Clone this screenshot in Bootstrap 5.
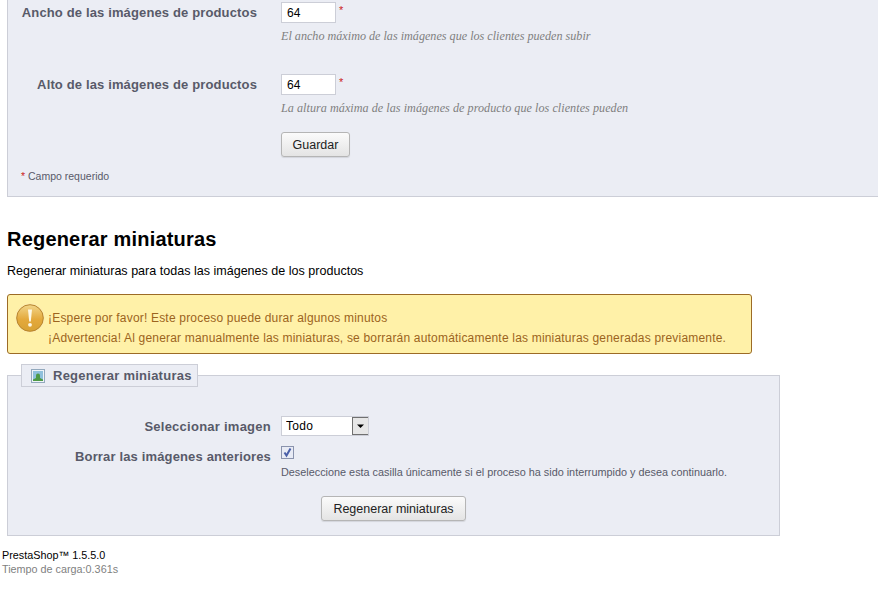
<!DOCTYPE html>
<html lang="es"><head><meta charset="utf-8"><title>Regenerar miniaturas</title>
<link rel="stylesheet" href="https://cdn.jsdelivr.net/npm/bootstrap@5.3.0/dist/css/bootstrap.min.css">
<style>
html,body{height:592px;overflow:hidden;background:#fff}
body{font-family:"Liberation Sans",Arial,sans-serif;font-size:12px;color:#000;line-height:1.2}
.prefs{margin:0 -3px 0 7px;height:197px;background:#ebedf4;border:1px solid #ccced7;border-top:0;padding-top:2px}
.frow{display:flex}
.flabel{width:249px;text-align:right;font-weight:700;font-size:13px;letter-spacing:.14px;color:#585a69;line-height:20px;padding-top:1px;flex:none}
.fval{margin-left:24px}
.num{width:55px;height:21px;border:1px solid #ccced7;background:#fff;padding:0 5px;font:12px "Liberation Sans",sans-serif;color:#000;display:block}
.req{color:#c22;font-size:11px;margin:3px 0 0 3px;line-height:11px;align-self:flex-start}
.hint{font-family:"Liberation Serif",serif;font-style:italic;font-size:12.15px;color:#7f7f7f;margin:6px 0 0;line-height:14px}
.hint.wider{letter-spacing:.04px}
.rowgap{margin-top:31px}
.pbtn{background:linear-gradient(#fbfbfb,#e4e4e4);border:1px solid #b5b5b5;border-radius:3px;font-size:12.5px;color:#222;padding:0;height:25px;line-height:22px;box-shadow:0 1px 1px rgba(0,0,0,.1)}
.save{width:69px;margin-top:17px}
.go{width:145px}
.reqnote{font-size:10.5px;color:#585a69;margin:13px 0 0 13px;line-height:12px}
.reqnote b{color:#c22;font-weight:400}
.htitle{font-size:20px;font-weight:700;margin:32px 0 0 7px;line-height:21px;color:#000;letter-spacing:.2px}
.sub{margin:14px 0 0 7px;line-height:14px;font-size:12.55px}
.warnbox{margin:16px 0 0 7px;width:745px;height:60px;background:#fff1a8;border:1px solid #9c6b26;border-radius:3px;color:#9c6420;display:flex;align-items:flex-start;padding:8px 0 0 7px;gap:3px;font-size:12px;letter-spacing:.19px}
.warnbox p{margin:5px 0 0;line-height:20px}
fieldset.regen{margin:10px 0 0 7px;width:773px;height:172px;background:#ebedf4;border:1px solid #ccced7;padding:0;min-width:0}
fieldset.regen legend{float:none;width:177px;height:23px;margin:0 0 0 13px;padding:0 0 0 9px;background:#ebedf4;border:1px solid #ccced7;font-size:13px;font-weight:700;color:#585a69;letter-spacing:.25px;line-height:21px;display:flex;align-items:center;gap:8px}
.r2 .flabel{width:263px;letter-spacing:.25px;padding-top:1px}
.r2 .tight{letter-spacing:.15px}
.r2 .fval{margin-left:10px}
.first{margin-top:29px}
.second{margin-top:9px}
.pick{appearance:none;width:88px;height:20px;border:1px solid #ccced7;background-color:#fff;background-image:url("data:image/svg+xml,%3Csvg xmlns='http://www.w3.org/2000/svg' width='17' height='18'%3E%3Crect x='.5' y='.5' width='16' height='17' fill='%23e6e6e6' stroke='%23707070'/%3E%3Cpath d='M5 7.5h7l-3.5 3.5z' fill='%23000'/%3E%3C/svg%3E");background-repeat:no-repeat;background-position:right -1px center;padding:0 0 0 4px;font:12px "Liberation Sans",sans-serif;color:#000;display:block;letter-spacing:.3px}
.tick{appearance:none;width:13px;height:13px;margin:0;display:block;border:1px solid #8a93ad;background:#e8ebf5 url("data:image/svg+xml,%3Csvg xmlns='http://www.w3.org/2000/svg' width='11' height='11'%3E%3Cpath d='M2.5 5.5l2 3L8.5 1.5' fill='none' stroke='%234a5fa8' stroke-width='2'/%3E%3C/svg%3E") center no-repeat}
.hint2{font-size:10.85px;color:#585a69;margin:7px 0 0;line-height:13px}
.actions{margin:17px 0 0 313px}
.foot{margin:12px 0 0 2px;font-size:10.8px;line-height:14px}
.foot div+div{color:#7f7f7f}
</style></head><body>
<div class="prefs">
  <div class="frow"><label class="flabel">Ancho de las imágenes de productos</label>
    <div class="fval"><div class="d-flex"><input class="num" value="64" aria-label="Ancho"><span class="req">*</span></div>
    <p class="hint">El ancho máximo de las imágenes que los clientes pueden subir</p></div></div>
  <div class="frow rowgap"><label class="flabel">Alto de las imágenes de productos</label>
    <div class="fval"><div class="d-flex"><input class="num" value="64" aria-label="Alto"><span class="req">*</span></div>
    <p class="hint wider">La altura máxima de las imágenes de producto que los clientes pueden</p>
    <button class="pbtn save">Guardar</button></div></div>
  <p class="reqnote"><b>*</b> Campo requerido</p>
</div>
<h1 class="htitle">Regenerar miniaturas</h1>
<p class="sub">Regenerar miniaturas para todas las imágenes de los productos</p>
<div class="warnbox">
  <svg width="30" height="30" viewBox="0 0 30 30"><defs><linearGradient id="g" x1="0" y1="0" x2="0" y2="1"><stop offset="0" stop-color="#f2d68a"/><stop offset=".55" stop-color="#e4a93c"/><stop offset="1" stop-color="#d8a233"/></linearGradient></defs><circle cx="15" cy="15" r="14.5" fill="#fbe9b0"/><circle cx="15" cy="15" r="13.3" fill="url(#g)" stroke="#b8862e"/><path d="M13 6.5h4l-1.2 12h-1.6z" fill="#fdf8e6"/><circle cx="15" cy="21.8" r="1.9" fill="#fdf8e6"/></svg>
  <p>¡Espere por favor! Este proceso puede durar algunos minutos<br>¡Advertencia! Al generar manualmente las miniaturas, se borrarán automáticamente las miniaturas generadas previamente.</p>
</div>
<fieldset class="regen">
  <legend><svg width="14" height="14" viewBox="0 0 14 14"><rect x=".5" y=".5" width="13" height="13" fill="#eef3f8" stroke="#93a9bd"/><rect x="2" y="2" width="10" height="10" fill="#8fc0dc"/><path d="M2 12V10.5L5 9V6.5a2 2 0 0 1 4 0V9l3 1.500V12z" fill="#4e9a45"/></svg>Regenerar miniaturas</legend>
  <div class="frow r2 first"><label class="flabel">Seleccionar imagen</label>
    <div class="fval"><select class="pick" aria-label="Imagen"><option>Todo</option></select></div></div>
  <div class="frow r2 second"><label class="flabel tight">Borrar las imágenes anteriores</label>
    <div class="fval"><input type="checkbox" class="tick" checked aria-label="Borrar">
    <p class="hint2">Deseleccione esta casilla únicamente si el proceso ha sido interrumpido y desea continuarlo.</p></div></div>
  <div class="d-flex actions"><button class="pbtn go">Regenerar miniaturas</button></div>
</fieldset>
<div class="foot"><div>PrestaShop™ 1.5.5.0</div><div>Tiempo de carga:0.361s</div></div>
</body></html>
